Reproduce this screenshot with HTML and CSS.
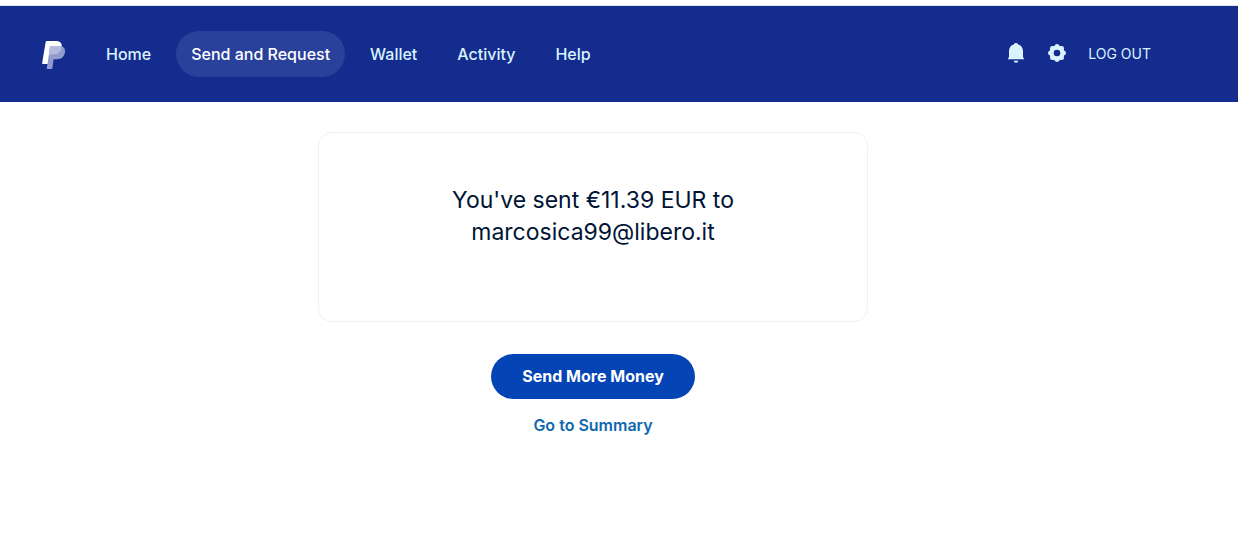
FILE: index.html
```html
<!DOCTYPE html>
<html lang="en">
	<head>
		<meta charset="UTF-8">
		<meta name="viewport" content="width=device-width, initial-scale=1">
		<title>Send and Request</title>
		<link rel="stylesheet" href="styles.css">
	</head>
	<body>
		<header class="header">
			<a class="logo" href="#" aria-label="PayPal">
				<svg width="24" height="30" viewBox="0 -1 24 30" aria-hidden="true">
					<path fill="#fff" d="M5.200 1H14c4 0 6.200 2.300 5.800 5.600L8 9 6.200 24H.8C.2 24 0 23.700.1 23.200L3.600 2.300C3.800 1.400 4.300 1 5.200 1z"/>
					<path fill="#929bcd" d="M9.700 6H17c4.700 0 6.700 2.600 5.900 6.600-.8 4.500-3.500 6.600-8 6.600h-2.500c-.6 0-.9.3-1 .9L10.400 28c-.1.700-.5 1-1.200 1H5.500c-.6 0-.8-.3-.7-.8L8 7c.1-.7.5-1 1.200-1z"/>
					<path fill="#b4bbdd" d="M9.700 6H17c1.100 0 2 .1 2.800.5-.7 5-3.600 7.700-7.800 7.700h-2.400c-.8 0-1.300.4-1.600 1.200L6.800 15 8 7c.1-.7.5-1 1.200-1z"/>
				</svg>
			</a>
			<nav class="nav">
				<a class="navlink" href="#">Home</a>
				<a class="navlink current" href="#" aria-current="page">Send and Request</a>
				<a class="navlink" href="#">Wallet</a>
				<a class="navlink" href="#">Activity</a>
				<a class="navlink" href="#">Help</a>
			</nav>
			<div class="tools">
				<button class="iconbtn" type="button" aria-label="Notifications">
					<svg width="20" height="22" viewBox="0 0 20 22" aria-hidden="true">
						<path fill="currentColor" d="M10 0c1.200 0 2 .6 2.200 1.500C15 2.300 17 4.600 17 8v5.500c0 1 .3 1.300 1 2V16.300H2V15.500c.7-.7 1-1 1-2V8c0-3.400 2-5.700 4.800-6.500C8 .6 8.800 0 10 0zM7.600 17.700h4.800c-.3 1.300-1.100 2-2.400 2s-2.100-.7-2.400-2z"/>
					</svg>
				</button>
				<button class="iconbtn" type="button" aria-label="Settings">
					<svg width="20" height="22" viewBox="0 0 20 22" aria-hidden="true">
						<circle cx="10" cy="10" r="5.500" fill="none" stroke="currentColor" stroke-width="4.400"/>
						<g fill="currentColor">
							<circle cx="10" cy="3.200" r="2.200"/>
							<circle cx="14.800" cy="5.200" r="2.200"/>
							<circle cx="16.800" cy="10" r="2.200"/>
							<circle cx="14.800" cy="14.800" r="2.200"/>
							<circle cx="10" cy="16.800" r="2.200"/>
							<circle cx="5.200" cy="14.800" r="2.200"/>
							<circle cx="3.200" cy="10" r="2.200"/>
							<circle cx="5.200" cy="5.200" r="2.200"/>
						</g>
					</svg>
				</button>
				<a class="logout" href="#">LOG OUT</a>
			</div>
		</header>

		<main class="main">
			<section class="card">
				<h1 class="title">You've sent €11.39 EUR to marcosica99@libero.it</h1>
			</section>
			<button class="sendmore" type="button">Send More Money</button>
			<a class="summary" href="#">Go to Summary</a>
		</main>
	</body>
</html>
```

FILE: styles.css
```css
*{box-sizing: border-box;}
body{
	margin: 0;
	padding-top: 5px;
	background-color: #fff;
	font-family: Inter, "Liberation Sans", sans-serif;
	font-size: 16px;
	color: #001435;
}
a{text-decoration: none;}
button{border: 0;font-family: inherit;cursor: pointer;}
svg{display: block;}

.header{
	display: flex;
	align-items: center;
	padding: 25px 87px 25px 42px;
	border-top: 1px solid #dfe6ee;
	background-color: #142c8e;
	color: #d9f3ff;
}
.logo{margin-right: 25px;}
.nav{display: flex;gap: 10px;}
.navlink{
	padding: 0 15px;
	border-radius: 23px;
	line-height: 46px;
	font-weight: 500;
	color: #d9f3ff;
}
.navlink:hover,.navlink.current{background-color: #2a419b;color: #fff;}

.tools{display: flex;align-items: center;gap: 21px;margin-left: auto;}
.iconbtn{padding: 0;background: none;color: #d9f3ff;}
.logout{font-size: 14px;line-height: 20px;color: #d9f3ff;}

.main{
	display: flex;
	flex-direction: column;
	align-items: center;
	padding: 30px 52px 30px 0;
}
.card{
	width: 100%;
	max-width: 550px;
	padding: 51px 110px 73px;
	border: 1px solid #f0f1f2;
	border-radius: 14px;
}
.title{
	margin: 0;
	font-size: 23px;
	line-height: 32px;
	font-weight: 400;
	text-align: center;
}
.sendmore{
	margin-top: 32px;
	padding: 0 31px;
	border-radius: 23px;
	background-color: #0544b5;
	font-size: 16px;
	line-height: 45px;
	font-weight: 700;
	color: #fff;
}
.sendmore:hover{background-color: #003791;}
.summary{
	margin-top: 16px;
	line-height: 20px;
	font-weight: 600;
	color: #0f68ae;
}
```
